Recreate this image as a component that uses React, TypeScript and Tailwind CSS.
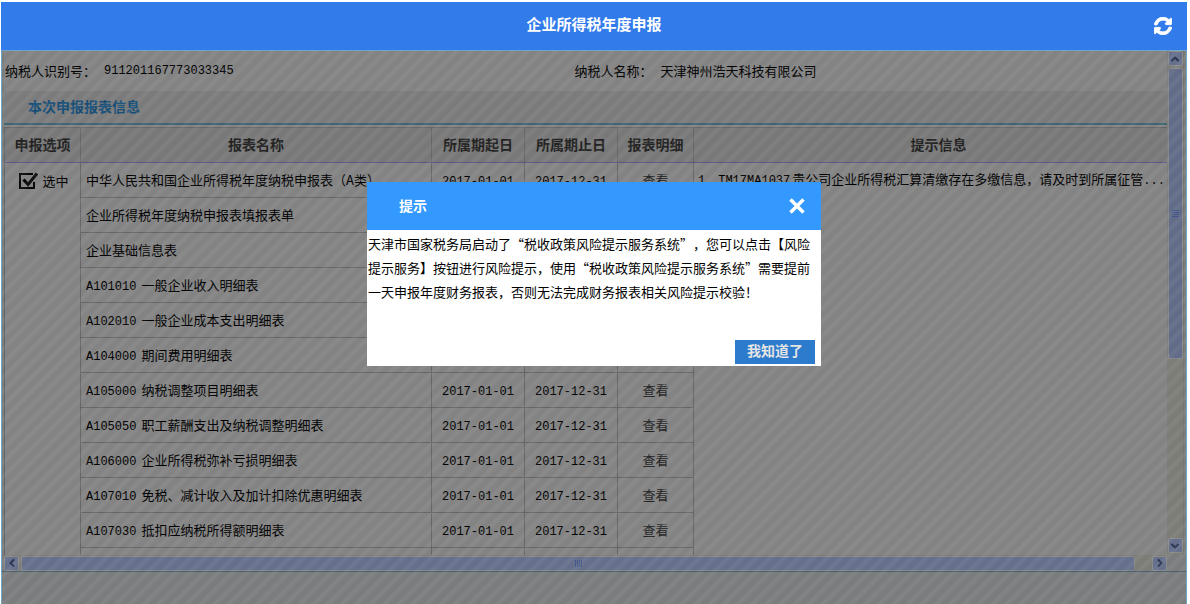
import { ChevronDown, ChevronLeft, ChevronRight, ChevronUp } from "lucide-react"
import { FaSyncAlt } from "react-icons/fa"

interface Report {
  code?: string
  name: string
}

const reports: Report[] = [
  { name: "中华人民共和国企业所得税年度纳税申报表（A类）" },
  { name: "企业所得税年度纳税申报表填报表单" },
  { name: "企业基础信息表" },
  { code: "A101010", name: "一般企业收入明细表" },
  { code: "A102010", name: "一般企业成本支出明细表" },
  { code: "A104000", name: "期间费用明细表" },
  { code: "A105000", name: "纳税调整项目明细表" },
  { code: "A105050", name: "职工薪酬支出及纳税调整明细表" },
  { code: "A106000", name: "企业所得税弥补亏损明细表" },
  { code: "A107010", name: "免税、减计收入及加计扣除优惠明细表" },
  { code: "A107030", name: "抵扣应纳税所得额明细表" },
]

const mono = "font-['Liberation_Mono',monospace] text-[12px]"
const cell = "h-[35px] border-b border-r border-[#666] p-0"
const headCell = "h-[36px] border-r border-t border-b border-r-[#666] border-t-[#666] border-b-[#5f5485] p-0 pb-0.5 text-[14px] font-bold text-[#222]"
const scrollButton = "flex h-[15px] w-[15px] shrink-0 items-center justify-center rounded-xs border border-[#8b8b8b] bg-[#66708c] text-[#2a3550]"

const InfoField = ({ label, children }: { label: string; children: React.ReactNode }) => (
  <div className="flex items-center gap-2">
    <span>{label}</span>
    {children}
  </div>
)

const ReportTable = () => (
  <table className="mt-0.5 w-full table-fixed border-separate border-spacing-0 border-l border-[#666]">
    <colgroup>
      <col className="w-[76px]" />
      <col className="w-[351px]" />
      <col className="w-[93px]" />
      <col className="w-[93px]" />
      <col className="w-[76px]" />
      <col />
    </colgroup>
    <thead className="bg-[#787878]">
      <tr>
        <th className={headCell}>申报选项</th>
        <th className={headCell}>报表名称</th>
        <th className={headCell}>所属期起日</th>
        <th className={headCell}>所属期止日</th>
        <th className={headCell}>报表明细</th>
        <th className="h-[36px] border-t border-b border-t-[#666] border-b-[#5f5485] p-0 pb-0.5 pl-4 text-[14px] font-bold text-[#222]">提示信息</th>
      </tr>
    </thead>
    <tbody>
      {reports.map((report, i) => (
        <tr key={report.name}>
          {i === 0 && (
            <td rowSpan={reports.length + 1} className="border-r border-[#666] p-0 align-top">
              <label className="flex h-[35px] items-center justify-center gap-1 pl-0.5">
                <span className="relative h-[18px] w-5">
                  <input type="checkbox" defaultChecked className="absolute inset-0 size-full appearance-none" />
                  <svg viewBox="0 0 20 18" className="pointer-events-none absolute inset-0 size-full" fill="none" stroke="#080808">
                    <path d="M15 2H2v14h14v-6" strokeWidth="2" />
                    <path d="M5.500 7.500l4.500 5L19 1.500" strokeWidth="3" />
                  </svg>
                </span>
                选中
              </label>
            </td>
          )}
          <td className={`${cell} pl-[5px]`}>
            {report.code && <span className={`${mono} mr-[5px]`}>{report.code}</span>}
            {report.name}
          </td>
          <td className={`${cell} text-center`}><span className={mono}>2017-01-01</span></td>
          <td className={`${cell} text-center`}><span className={mono}>2017-12-31</span></td>
          <td className={`${cell} text-center`}>
            <a href="#detail" className="text-[#222]">查看</a>
          </td>
          {i === 0 && (
            <td rowSpan={reports.length + 1} className="p-0 pl-1 align-top leading-8 whitespace-nowrap">
              <span className={mono}>1</span>、<span className={`${mono} mr-0.5`}>TM17MA1037</span>
              贵公司企业所得税汇算清缴存在多缴信息，请及时到所属征管<span className={mono}>...</span>
            </td>
          )}
        </tr>
      ))}
      <tr>
        <td className="h-[7px] border-r border-[#666] p-0" />
        <td className="border-r border-[#666] p-0" />
        <td className="border-r border-[#666] p-0" />
        <td className="border-r border-[#666] p-0" />
      </tr>
    </tbody>
  </table>
)

const VerticalScrollbar = () => (
  <div className="flex w-[17px] shrink-0 flex-col items-center border-r border-[#747470] bg-[#7d7d77] pb-0.5">
    <button aria-label="向上滚动" className={scrollButton}><ChevronUp size={12} strokeWidth={4} /></button>
    <div className="mt-0.5 flex h-[291px] w-[15px] flex-col items-center justify-center gap-px rounded-xs border border-[#85878b] bg-[#626c88]">
      {[0, 1, 2, 3].map((n) => <i key={n} className="h-px w-[7px] bg-[#43588a]" />)}
    </div>
    <button aria-label="向下滚动" className={`${scrollButton} mt-auto`}><ChevronDown size={12} strokeWidth={4} /></button>
  </div>
)

const HorizontalScrollbar = () => (
  <div className="mr-[17px] flex h-[16px] shrink-0 items-center bg-[#7d7d77]">
    <button aria-label="向左滚动" className={scrollButton}><ChevronLeft size={12} strokeWidth={4} /></button>
    <div className="mr-[17px] ml-0.5 flex h-[15px] flex-1 items-center justify-center gap-px rounded-xs border border-[#85878b] bg-[#66708c]">
      {[0, 1, 2, 3].map((n) => <i key={n} className="h-[7px] w-px bg-[#43588a]" />)}
    </div>
    <button aria-label="向右滚动" className={scrollButton}><ChevronRight size={12} strokeWidth={4} /></button>
  </div>
)

const TipDialog = () => (
  <div role="dialog" aria-label="提示" className="absolute top-[131px] left-1/2 w-[454px] -translate-x-1/2 bg-white">
    <div className="flex h-12 items-center justify-between bg-[#3399ff] pr-4 pl-8 text-white">
      <h2 className="pb-0.5 text-[14px] font-bold">提示</h2>
      <button aria-label="关闭">
        <svg width="16" height="16" viewBox="0 0 16 16" stroke="currentColor" strokeWidth="3.500">
          <path d="M1.500 1.500l13 13M14.500 1.500l-13 13" />
        </svg>
      </button>
    </div>
    <p className="h-[110px] px-px pt-0.5 leading-6 whitespace-nowrap [text-spacing-trim:space-all]">
      天津市国家税务局启动了“税收政策风险提示服务系统”，您可以点击【风险<br />
      提示服务】按钮进行风险提示，使用“税收政策风险提示服务系统”需要提前<br />
      一天申报年度财务报表，否则无法完成财务报表相关风险提示校验！
    </p>
    <div className="flex justify-end pr-1.5 pb-0.5">
      <button className="h-6 w-20 bg-[#2d7bcc] pb-1 text-[14px] font-bold text-[#e4e4e4]">我知道了</button>
    </div>
  </div>
)

export default function App() {
  return (
    <div lang="zh-CN" className="flex h-screen flex-col overflow-hidden bg-white pt-0.5 pr-[3px] pl-px font-['Noto_Sans_CJK_SC',sans-serif] text-[13px] text-black">
      <header className="flex h-12 shrink-0 items-center bg-[#327beb] text-white">
        <span className="w-12" />
        <h1 className="flex-1 pb-1 text-center text-[15px] font-bold">企业所得税年度申报</h1>
        <button aria-label="刷新" className="flex w-12 justify-center">
          <FaSyncAlt size={18} stroke="currentColor" strokeWidth={28} />
        </button>
      </header>
      <main className="relative flex min-h-0 flex-1 flex-col border-x border-t border-[#6fa5c5] bg-[#7b7c7e]">
        <div className="flex min-h-0 flex-1 flex-col border-b border-[#48606f] px-0.5">
          <div className="flex min-h-0 flex-1">
            <div className="min-w-0 flex-1 overflow-hidden bg-[#838383]">
              <div className="grid h-10 grid-cols-[49fr_51fr] items-center pl-px">
                <InfoField label="纳税人识别号："><span className={mono}>911201167773033345</span></InfoField>
                <InfoField label="纳税人名称："><span>天津神州浩天科技有限公司</span></InfoField>
              </div>
              <h2 className="h-[34px] border-b-2 border-[#3f6472] bg-[#7b7b7b] pl-6 text-[14px] leading-[30px] font-bold text-[#164e78]">本次申报报表信息</h2>
              <ReportTable />
            </div>
            <VerticalScrollbar />
          </div>
          <HorizontalScrollbar />
        </div>
        <div className="h-8 shrink-0" />
        <div className="pointer-events-none absolute inset-0 bg-[repeating-linear-gradient(135deg,rgba(255,255,255,0.05)_0px,rgba(255,255,255,0.05)_3px,transparent_5px,transparent_9px,rgba(255,255,255,0.05)_10px)]" />
        <TipDialog />
      </main>
    </div>
  )
}
